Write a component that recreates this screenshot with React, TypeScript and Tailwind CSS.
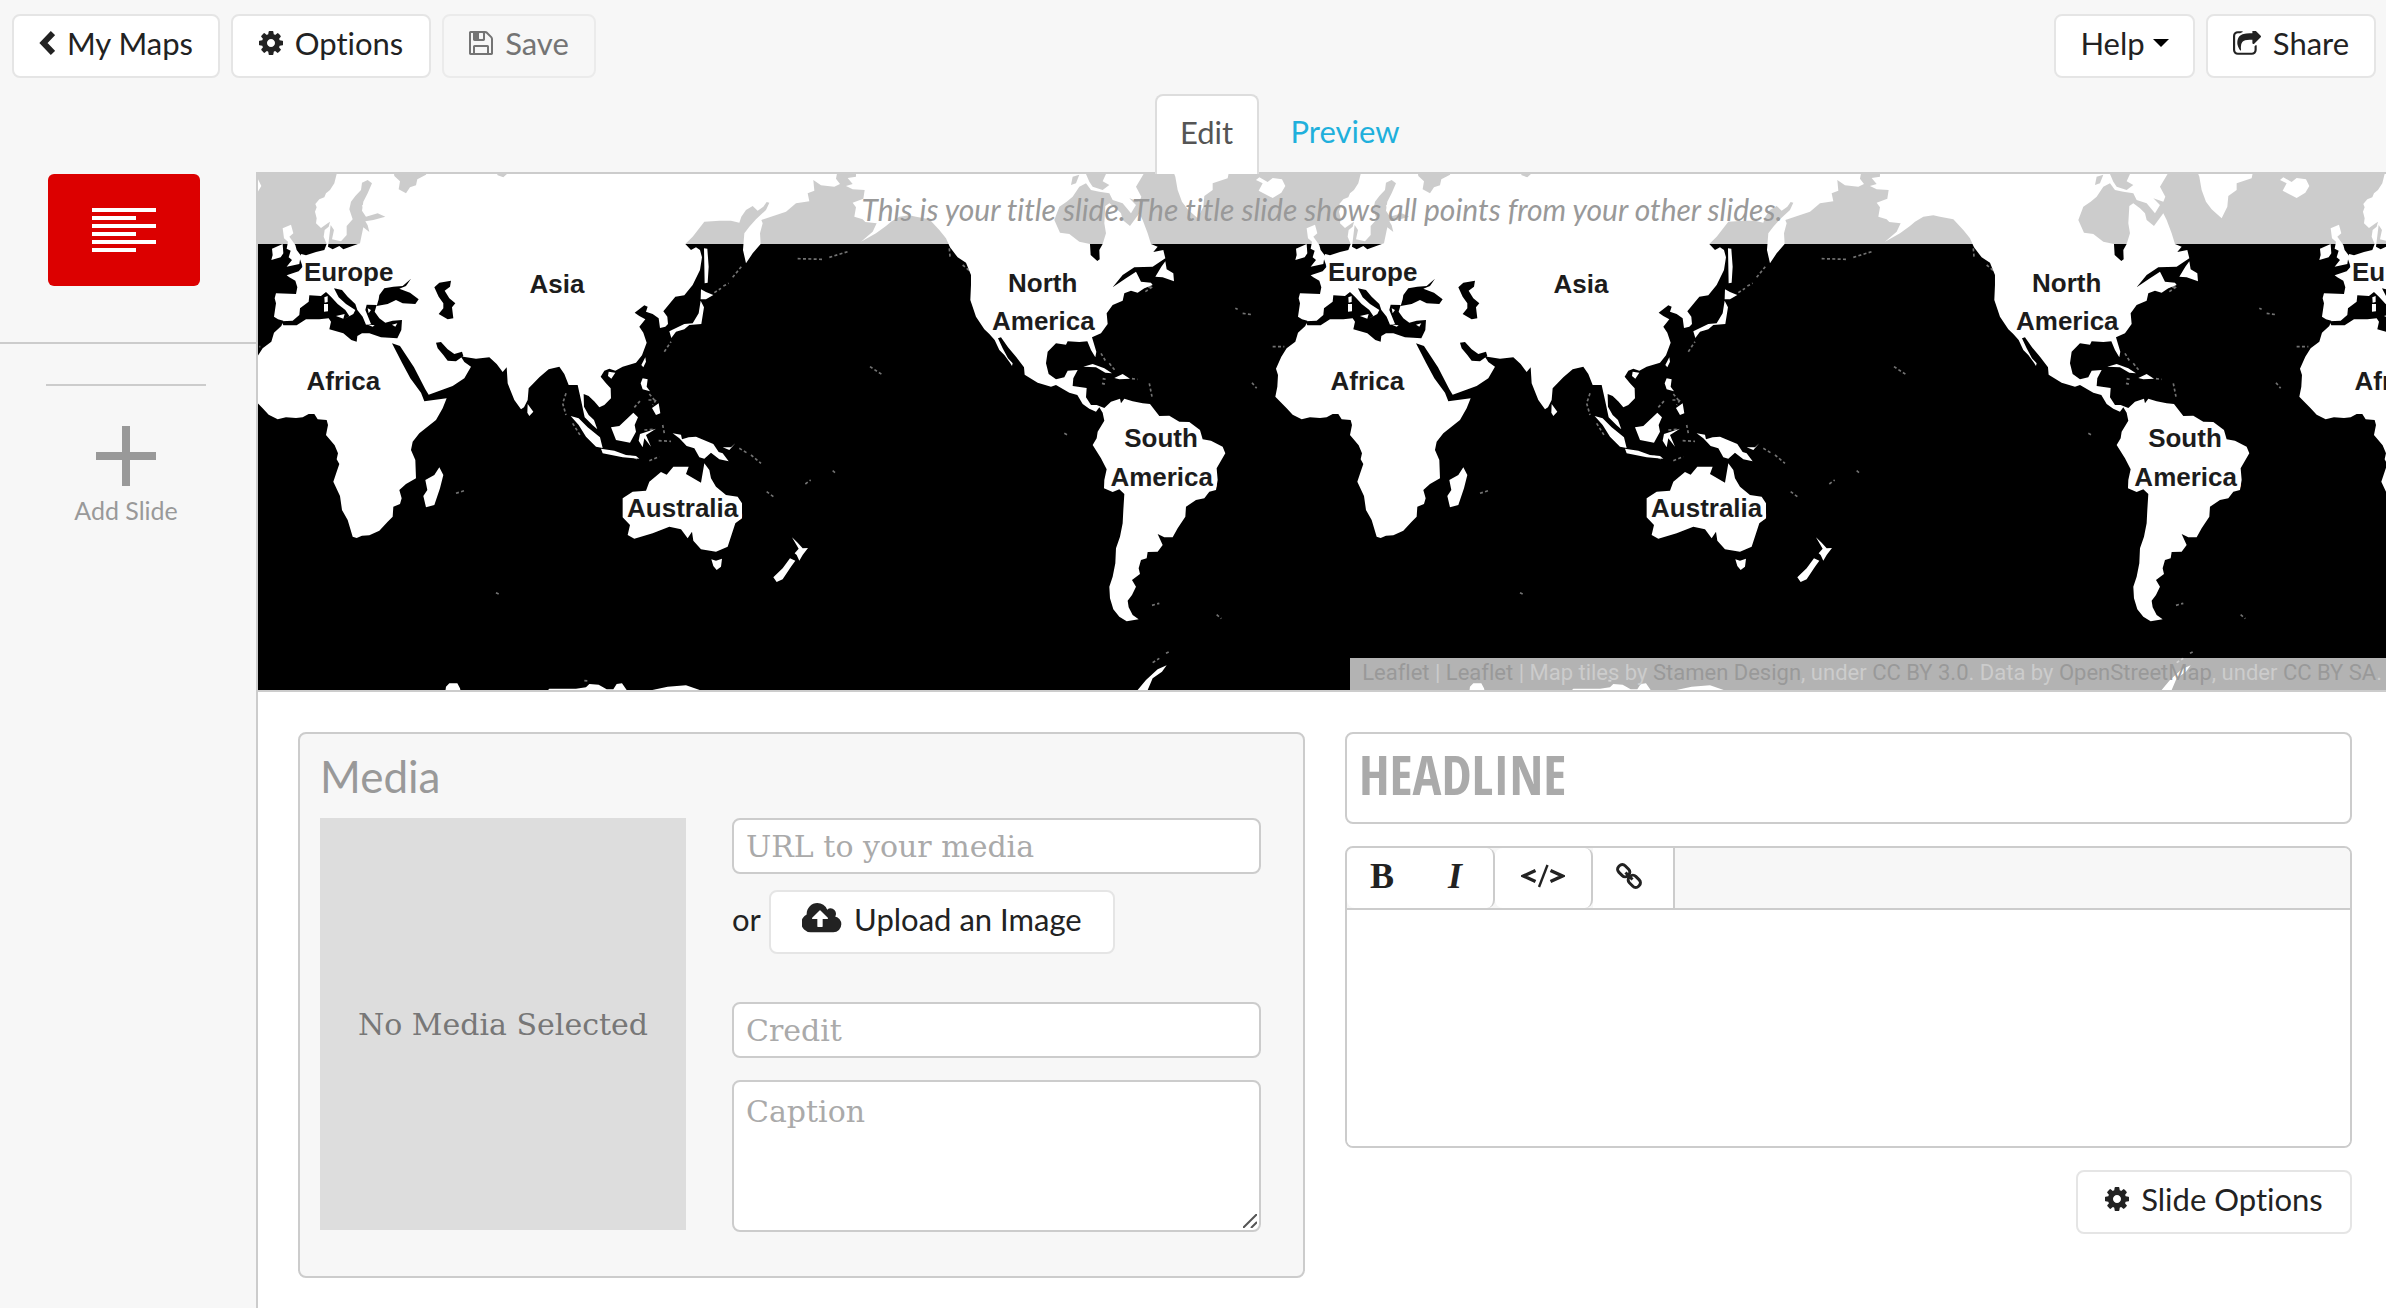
import React, { useId } from 'react';

const COG =
  'M1152 896q0-106-75-181t-181-75-181 75-75 181 75 181 181 75 181-75 75-181zm512-109v222q0 12-8 23t-20 13l-185 28q-19 54-39 91 35 50 107 138 10 12 10 25t-9 23q-27 37-99 108t-94 71q-12 0-26-9l-138-108q-44 23-91 38-16 136-29 186-7 28-36 28h-222q-14 0-24.5-8.5t-11.5-21.5l-28-184q-49-16-90-37l-141 107q-10 9-25 9-14 0-25-11-126-114-165-168-7-10-7-23 0-12 8-23 15-21 51-66.5t54-70.5q-27-50-41-99l-183-27q-13-2-21-12.5t-8-23.5v-222q0-12 8-23t19-13l186-28q14-46 39-92-40-57-107-138-10-12-10-24 0-10 9-23 26-36 98.5-107.5t94.5-71.5q13 0 26 10l138 107q44-23 91-38 16-136 29-186 7-28 36-28h222q14 0 24.5 8.5t11.5 21.5l28 184q49 16 90 37l142-107q9-9 24-9 13 0 25 10 129 119 165 170 7 8 7 22 0 12-8 23-15 21-51 66.5t-54 70.5q26 50 41 98l183 28q13 2 21 12.5t8 23.5z';
const FLOPPY =
  'M512 1536h768v-384h-768v384zm896 0h128v-896q0-14-10-38.5t-20-34.5l-281-281q-10-10-34-20t-39-10v416q0 40-28 68t-68 28h-576q-40 0-68-28t-28-68v-416h-128v1280h128v-416q0-40 28-68t68-28h832q40 0 68 28t28 68v416zm-384-928v-320q0-13-9.5-22.5t-22.5-9.5h-192q-13 0-22.5 9.5t-9.5 22.5v320q0 13 9.5 22.5t22.5 9.5h192q13 0 22.5-9.5t9.5-22.5zm640 32v928q0 40-28 68t-68 28h-1344q-40 0-68-28t-28-68v-1344q0-40 28-68t68-28h928q40 0 88 20t76 48l280 280q28 28 48 76t20 88z';
const SHARE =
  'M1408 989v259q0 119-84.5 203.5t-203.5 84.5h-832q-119 0-203.5-84.5t-84.5-203.5v-832q0-119 84.5-203.5t203.5-84.5h255q13 0 22.5 9.5t9.5 22.5q0 27-26 32-77 26-133 60-10 4-16 4h-112q-66 0-113 47t-47 113v832q0 66 47 113t113 47h832q66 0 113-47t47-113v-214q0-19 18-29 28-13 54-37 16-16 35-8 21 9 21 29zm237-496l-384 384q-18 19-45 19-12 0-25-5-39-17-39-59v-192h-160q-323 0-438 131-119 137-74 473 3 23-20 34-8 2-12 2-16 0-26-13-10-14-21-31t-39.5-68.5-49.5-99.5-38.5-114-17.5-122q0-49 3.5-91t14-90 28-88 47-81.5 68.5-74 94.5-61.5 124.5-48.5 159.5-30.5 196.5-11h160v-192q0-42 39-59 13-5 25-5 26 0 45 19l384 384q19 19 19 45t-19 45z';
const CLOUD =
  'M1216 864q0-14-9-23l-352-352q-9-9-23-9t-23 9l-351 351q-10 12-10 24 0 14 9 23t23 9h224v352q0 13 9.5 22.5t22.5 9.5h192q13 0 22.5-9.5t9.5-22.5v-352h224q13 0 22.5-9.5t9.5-22.5zm640 288q0 159-112.5 271.5t-271.5 112.5h-1088q-185 0-316.5-131.5t-131.5-316.5q0-130 70-240t188-165q-2-30-2-43 0-212 150-362t362-150q156 0 285.5 87t188.5 231q71-62 166-62 106 0 181 75t75 181q0 76-41 138 130 31 213.5 135.5t83.5 238.5z';

function Glyph({ d, box, className }: { d: string; box: string; className: string }) {
  return (
    <svg viewBox={box} className={className} fill="currentColor" aria-hidden="true">
      <path d={d} />
    </svg>
  );
}

function Button({ className = '', disabled = false, children }: { className?: string; disabled?: boolean; children: React.ReactNode }) {
  return (
    <button
      type="button"
      disabled={disabled}
      className={`flex h-16 items-center justify-center rounded-lg border-2 border-[#e5e5e5] bg-white pb-1.5 text-[31px] whitespace-nowrap text-[#222] disabled:border-[#ebebeb] disabled:bg-transparent disabled:text-[#747474] ${className}`}
    >
      {children}
    </button>
  );
}

/* Coastlines of one 1024px-wide world tile, in thirds of a pixel. */
const EURASIA_AFRICA =
  'M245 0L235 40 222 60 210 70 205 82 190 88 178 102 182 112 177 125 182 145 180 160 195 174 215 160 222 155 218 170 206 180 203 200 212 222 205 240 180 246 150 256 136 252 130 262 140 290 128 304 92 316 100 322 118 332 124 352 120 372 60 370 56 385 60 400 54 440 66 448 82 452 76 468 54 488 46 515 20 535 4 560 -12 596 -6 615 -8 650 -14 680 20 715 38 734 65 748 90 742 120 744 140 742 158 732 175 732 185 748 212 750 216 765 210 795 236 826 246 850 242 868 250 882 242 905 232 935 252 978 258 1020 275 1050 290 1100 302 1104 318 1097 340 1096 370 1082 395 1055 410 1040 412 1010 432 1002 437 985 430 960 450 942 480 925 478 870 465 840 470 815 490 790 540 750 560 715 572 685 505 694 495 668 463 625 438 578 408 520 432 528 474 592 508 658 518 674 590 648 625 625 645 590 625 576 612 556 622 560 660 566 700 562 722 582 740 606 752 592 755 640 775 690 795 718 804 712 815 690 818 655 850 622 878 598 910 590 925 612 938 645 965 645 975 690 986 742 1010 766 1024 778 1014 750 998 735 984 710 983 672 998 678 1016 695 1030 712 1045 705 1065 685 1064 655 1050 640 1034 620 1045 602 1060 596 1078 602 1100 590 1140 578 1158 556 1172 518 1162 488 1150 470 1168 448 1150 438 1136 428 1165 406 1175 410 1170 425 1190 432 1208 445 1212 474 1228 470 1236 462 1234 440 1222 424 1240 402 1258 380 1285 376 1310 345 1332 300 1338 262 1332 240 1320 232 1305 240 1288 222 1310 200 1345 155 1390 152 1425 152 1450 158 1456 140 1470 120 1490 108 1505 122 1522 110 1532 96 1540 98 1530 120 1500 148 1480 170 1465 190 1461 240 1470 280 1490 250 1514 222 1512 190 1520 160 1516 150 1545 140 1590 125 1620 100 1660 94 1655 70 1675 62 1672 30 1695 46 1735 50 1752 42 1740 26 1745 0Z';
const AMERICAS =
  'M1800 0L1800 20 1775 24 1790 42 1770 48 1790 58 1826 60 1822 86 1790 98 1800 112 1795 140 1820 148 1828 156 1862 160 1850 185 1815 215 1860 190 1890 168 1905 155 1930 140 1960 136 1980 140 2020 148 2050 180 2070 205 2082 232 2105 262 2130 278 2145 315 2145 345 2143 390 2160 440 2185 478 2200 492 2216 510 2230 540 2245 555 2262 578 2268 588 2270 580 2256 565 2240 535 2226 505 2235 502 2256 532 2280 560 2304 592 2306 614 2345 638 2385 650 2400 645 2440 668 2464 675 2480 702 2500 716 2520 725 2530 712 2540 728 2545 752 2525 785 2522 805 2510 825 2535 865 2552 898 2545 930 2544 955 2570 966 2590 958 2605 972 2602 1020 2600 1060 2592 1100 2580 1135 2578 1180 2570 1220 2560 1250 2562 1285 2572 1318 2590 1340 2612 1354 2648 1348 2630 1335 2618 1312 2615 1292 2628 1275 2640 1250 2628 1230 2652 1212 2648 1195 2655 1170 2672 1165 2675 1146 2705 1145 2720 1125 2705 1092 2725 1102 2750 1102 2765 1075 2788 1040 2790 1010 2820 990 2845 985 2860 965 2880 960 2885 930 2882 895 2908 850 2900 830 2865 812 2840 808 2832 780 2800 756 2770 755 2740 737 2710 738 2682 702 2660 700 2630 694 2605 686 2595 700 2592 686 2565 695 2545 714 2522 705 2505 705 2490 682 2492 654 2450 648 2452 625 2465 600 2435 602 2425 622 2400 628 2378 612 2370 580 2375 545 2400 520 2430 524 2435 514 2470 516 2494 514 2505 540 2518 562 2521 545 2508 502 2535 490 2555 462 2552 430 2570 405 2600 392 2605 370 2625 362 2645 368 2665 355 2690 345 2685 338 2655 335 2645 315 2640 305 2610 325 2570 352 2600 315 2635 292 2690 290 2728 265 2722 240 2692 246 2705 230 2685 222 2675 190 2660 150 2650 130 2622 168 2600 150 2595 130 2580 115 2560 100 2548 108 2545 160 2550 190 2540 222 2530 240 2531 268 2524 273 2504 255 2502 222 2470 215 2440 192 2412 188 2395 150 2410 110 2432 95 2450 80 2470 50 2490 40 2505 60 2530 65 2560 70 2570 90 2600 100 2625 130 2640 105 2620 85 2650 95 2656 80 2640 50 2670 0Z';
const ISLANDS =
  'M80 175L105 164 112 190 100 200 118 225 122 240 134 256 130 282 92 290 108 270 98 262 104 242 92 236 96 215 84 205ZM48 236L80 222 82 250 74 262 46 270 50 255ZM550 892L562 915 552 955 535 1005 510 1012 502 978 514 960 508 930 535 915ZM815 702L832 725 820 738 814 728ZM944 738L968 745 995 772 1032 802 1040 834 1020 830 990 800 968 765ZM1035 836L1075 842 1110 855 1140 858 1150 866 1100 862 1040 850ZM1065 772L1090 768 1132 728 1146 742 1136 765 1140 785 1122 818 1080 810ZM1152 792L1200 776 1170 795 1185 830 1165 805 1160 832 1148 812ZM1250 790L1275 794 1278 808 1298 802 1320 800 1372 822 1388 846 1400 850 1418 874 1390 868 1365 848 1345 866 1330 862 1315 835 1292 828 1270 805ZM1400 832L1425 832 1438 820 1420 840ZM1345 880L1360 900 1365 925 1380 950 1410 975 1445 980 1458 1000 1458 1045 1438 1060 1415 1130 1380 1145 1335 1138 1312 1112 1308 1085 1295 1105 1275 1078 1240 1070 1190 1090 1135 1106 1115 1095 1122 1065 1100 1042 1100 985 1130 965 1170 962 1180 935 1215 906 1232 914 1252 890 1298 890 1290 912 1335 938ZM1366 1168L1380 1172 1398 1166 1395 1190 1382 1200 1372 1188ZM1608 1102L1625 1118 1640 1135 1656 1134 1640 1155 1630 1172 1622 1155 1616 1150 1628 1136ZM1602 1165L1618 1172 1605 1190 1580 1228 1562 1236 1552 1222 1580 1195ZM1335 358L1350 366 1372 375 1350 388 1334 388ZM1334 392L1344 412 1336 462 1300 465 1285 478 1260 485 1246 504 1240 484 1285 462 1310 460 1328 430ZM1344 235L1354 236 1358 290 1355 338 1346 340ZM1168 562L1170 575 1162 592 1156 585ZM1058 605L1078 608 1066 626 1056 618ZM1160 625L1175 628 1172 650 1182 664 1160 658 1154 640ZM1188 714L1208 700 1213 730 1200 735ZM2482 590L2510 582 2545 595 2568 610 2548 608 2520 592ZM2575 624L2600 612 2622 626 2590 628ZM2716 290L2728 274 2732 298 2752 310 2754 334 2720 322 2698 320ZM2750 0L2758 20 2765 60 2778 95 2795 118 2825 145 2842 110 2845 78 2870 60 2870 40 2915 25 2920 0ZM3000 30L3020 40 3008 62 3050 84 3076 68 3088 48 3078 28 3050 24 3035 36 3010 22ZM567 1572L570 1550 580 1540 604 1540 612 1555 616 1572ZM865 1572L880 1556 960 1556 990 1552 1000 1542 1028 1544 1052 1558 1072 1558 1082 1542 1098 1540 1112 1560 1180 1562 1235 1550 1290 1546 1337 1562 1340 1572ZM2732 1486L2705 1498 2670 1530 2635 1572 2670 1572 2690 1525 2718 1505Z';
const INLAND_SEAS =
  'M348 40L335 30 318 38 315 60 298 78 285 95 280 118 290 148 272 168 272 195 255 214 228 208 234 180 224 165 216 230 230 238 250 228 262 238 295 226 312 220 316 200 322 172 340 186 335 166 328 154 352 150 388 140 365 130 330 140 318 122 322 95 335 70ZM412 0L415 18 432 34 428 58 450 70 462 52 480 46 484 28 510 14 515 0ZM718 0L725 16 742 22 755 10 752 0ZM76 454L110 452 130 435 132 415 158 395 160 376 195 378 210 366 225 380 245 402 268 420 280 438 266 446 292 432 298 420 270 402 248 382 234 355 258 360 275 380 298 402 304 420 320 440 330 464 345 462 328 420 332 404 362 405 356 425 370 445 388 458 410 452 438 450 436 480 424 505 375 502 340 490 318 490 304 498 302 515 286 510 262 490 220 478 225 455 218 445 190 448 150 448 122 466 82 466ZM370 375L385 355 412 350 440 348 465 326 450 348 430 356 462 368 488 388 478 402 440 400 420 390 395 402 362 408 368 388ZM535 352L550 338 585 332 582 350 566 362 580 385 598 400 588 412 592 445 575 448 548 432 562 415 562 400 548 380ZM540 518L555 516 575 538 595 552 618 545 622 558 600 574 575 572 562 555 545 535ZM2450 20L2470 14 2460 40 2445 45ZM2490 12L2550 12 2540 34 2560 45 2540 60 2510 50 2500 35Z';
const SEA_ISLES =
  'M205 382L215 378 215 396 206 398ZM204 402L216 402 216 424 204 425ZM240 438L266 432 262 446ZM408 464L424 460 418 470ZM332 463L356 466 350 470ZM335 415L345 420 338 430ZM318 105L328 108 322 116Z';
/* Archipelagos and reefs too small to outline. */
const SPECKS =
  'M1375 368L1395 355M1402 348L1418 340M1430 322L1460 285M1180 672L1195 690L1175 690M1200 690L1190 705M1135 712L1155 690M1165 780L1195 778M1208 812L1245 814M1220 765L1225 790M1180 872L1210 860M1120 858L1150 868M930 670L920 700L930 735M950 760L975 800M1450 835L1475 850M1485 855L1515 880M1532 965L1555 982M720 1268L732 1274M600 970L625 962M1625 266L1700 268M1720 262L1775 245M2538 640L2552 644M2540 626L2550 628M2628 626L2645 628M2535 550L2550 575M2560 580L2580 605M2680 640L2688 680M1842 590L1880 615M1648 942L1664 930M1730 902L1740 910M2425 790L2435 795M2688 1306L2710 1300M2882 1334L2896 1346M2938 415L2945 418M2960 430L2988 434M3050 530L3085 530M2988 638L3002 655M2690 1478L2710 1465M2730 1450L2740 1445M985 1532L1000 1533M2080 235L2082 260M2120 285L2155 315M2668 365L2690 350L2660 352M1225 545L1245 515';

const LABELS: [string, number, number][] = [
  ['Europe', 278, 333],
  ['Asia', 903, 368],
  ['Africa', 262, 660],
  ['Australia', 1280, 1040],
  ['North', 2360, 366],
  ['America', 2362, 480],
  ['South', 2715, 832],
  ['America', 2717, 947],
];

function WorldMap() {
  return (
    <svg className="block h-full w-full bg-black" role="img" aria-label="World map">
      <defs>
        <g id="world">
          <g fill="#fff">
            <path d={EURASIA_AFRICA} />
            <path d={AMERICAS} />
            <path d={ISLANDS} />
          </g>
          <path d={INLAND_SEAS} fill="#000" />
          <path d={SEA_ISLES} fill="#fff" />
          <path d={SPECKS} fill="none" stroke="#fff" strokeOpacity="0.45" strokeWidth="5" strokeDasharray="9 7" />
          <g
            className="font-bold"
            fontFamily="'Liberation Sans', Arial, sans-serif"
            fontSize="78"
            textAnchor="middle"
            fill="#1c1c1c"
            stroke="#fff"
            strokeWidth="20"
            strokeLinejoin="round"
            paintOrder="stroke"
          >
            {LABELS.map(([name, x, y]) => (
              <text key={`${name}${x}`} x={x} y={y}>
                {name}
              </text>
            ))}
          </g>
        </g>
      </defs>
      <g transform="scale(0.33333) translate(-6 -12)">
        {[-1, 0, 1, 2].map((n) => (
          <use key={n} href="#world" x={n * 3072} />
        ))}
      </g>
    </svg>
  );
}

function Attribution() {
  const link = 'text-[#999]';
  return (
    <p className="absolute right-0 bottom-0 h-8 bg-white/70 pr-1 pl-3 font-[Roboto,sans-serif] text-[22px] leading-[30px] whitespace-nowrap text-[#ccc]">
      <a href="#leaflet" className={link}>Leaflet</a> | <a href="#leaflet" className={link}>Leaflet</a> | Map tiles by{' '}
      <a href="#stamen" className={link}>Stamen Design</a>, under <a href="#cc-by" className={link}>CC BY 3.0</a>. Data by{' '}
      <a href="#osm" className={link}>OpenStreetMap</a>, under <a href="#cc-by-sa" className={link}>CC BY SA</a>.
    </p>
  );
}

function Sidebar() {
  return (
    <aside className="w-64 shrink-0 pt-20">
      <div className="border-b-2 border-[#ccc] pb-14">
        <button type="button" aria-label="Title slide" className="ml-12 flex h-28 w-38 items-center justify-center rounded-md bg-[#dc0000]">
          <svg width="64" height="44" viewBox="0 0 64 44" fill="#fff" aria-hidden="true">
            {[64, 44, 64, 44, 64, 44].map((w, i) => (
              <rect key={i} y={i * 8} width={w} height="4" />
            ))}
          </svg>
        </button>
      </div>
      <div className="mt-10 mr-[50px] ml-[46px] border-t-2 border-[#ccc] pt-10">
        <button type="button" className="flex w-full flex-col items-center gap-2 text-[25px] leading-8 text-[#999]">
          <svg width="60" height="60" viewBox="0 0 60 60" fill="currentColor" aria-hidden="true">
            <rect x="26" width="8" height="60" />
            <rect y="26" width="60" height="8" />
          </svg>
          Add Slide
        </button>
      </div>
    </aside>
  );
}

const field =
  'block w-full rounded-lg border-2 border-[#ccc] bg-white px-3 font-[DejaVu_Serif,serif] text-[30px] text-[#222] outline-none placeholder:text-[#aaa]';

function MediaPanel() {
  const id = useId();
  return (
    <section className="min-w-0 rounded-lg border-2 border-[#ccc] bg-[#f7f7f7] pt-5 pr-[42px] pb-11 pl-5">
      <h2 className="text-[44px] leading-[44px] text-[#999]">Media</h2>
      <div className="mt-5 flex gap-[46px]">
        <div className="flex h-[412px] w-[366px] shrink-0 items-center justify-center bg-[#ddd] font-[DejaVu_Serif,serif] text-[30px] whitespace-nowrap text-[#777]">
          No Media Selected
        </div>
        <div className="min-w-0 flex-1">
          <input id={`${id}-url`} type="text" aria-label="URL to your media" placeholder="URL to your media" className={`h-14 ${field}`} />
          <div className="mt-4 flex items-center gap-2 text-[31px] text-[#222]">
            <span className="pb-1.5">or</span>
            <Button className="w-[346px] gap-3">
              <Glyph d={CLOUD} box="0 128 1856 1536" className="h-8 w-10" />
              Upload an Image
            </Button>
          </div>
          <input id={`${id}-credit`} type="text" aria-label="Credit" placeholder="Credit" className={`mt-12 h-14 ${field}`} />
          <div className="relative mt-[22px]">
            <textarea
              id={`${id}-caption`}
              aria-label="Caption"
              placeholder="Caption"
              className={`h-[152px] pt-2 leading-11 [&::-webkit-resizer]:hidden ${field}`}
            />
            <svg className="pointer-events-none absolute right-1 bottom-1 text-[#555]" width="14" height="14" viewBox="0 0 14 14" stroke="currentColor" strokeWidth="2" aria-hidden="true">
              <path d="M0 14L14 0M8 14L14 8" />
            </svg>
          </div>
        </div>
      </div>
    </section>
  );
}

function TextPanel() {
  return (
    <section className="flex min-w-0 flex-col gap-[22px]">
      <input
        type="text"
        aria-label="Headline"
        placeholder="HEADLINE"
        className="block h-[92px] w-full rounded-lg border-2 border-[#ccc] bg-white px-3 pb-2 font-['Open_Sans_Condensed','Roboto_Condensed',sans-serif] text-[54px] font-bold text-[#222] outline-none placeholder:text-[#aaa]"
      />
      <div className="overflow-hidden rounded-lg border-2 border-[#ccc] bg-white">
        <div role="toolbar" aria-label="Formatting" className="flex h-[62px] border-b-2 border-[#ccc] bg-[#f7f7f7] text-[#222]">
          <div className="flex rounded-lg border-r-2 border-[#ccc] bg-white pb-1 font-['Liberation_Serif',serif] text-[36px] font-bold">
            <button type="button" className="w-[70px]">B</button>
            <button type="button" className="w-19 italic">I</button>
          </div>
          <div className="flex rounded-lg border-r-2 border-[#ccc] bg-white">
            <button type="button" aria-label="Edit HTML" className="flex w-24 items-center justify-center pb-1">
              <svg width="44" height="24" viewBox="0 0 44 24" fill="none" stroke="currentColor" aria-hidden="true">
                <path d="M14.500 6.500L2.500 12L14.500 17.500M29.500 6.500L41.500 12L29.500 17.500" strokeWidth="3.400" />
                <path d="M26.500 1L18 23" strokeWidth="2.400" />
              </svg>
            </button>
          </div>
          <div className="flex border-r-2 border-[#ccc] bg-white">
            <button type="button" aria-label="Insert link" className="flex w-20 items-center justify-center pr-2 pb-1">
              <svg width="26" height="26" viewBox="0 0 26 26" fill="none" stroke="currentColor" strokeWidth="3" aria-hidden="true">
                <g transform="rotate(45 13 13)">
                  <rect x="-1" y="8.500" width="13" height="9" rx="4" />
                  <rect x="14" y="8.500" width="13" height="9" rx="4" />
                  <path d="M8 13H18" />
                </g>
              </svg>
            </button>
          </div>
        </div>
        <textarea aria-label="Slide text" className="block h-[236px] w-full resize-none bg-white p-3 font-[DejaVu_Serif,serif] text-[30px] outline-none" />
      </div>
      <Button className="w-[276px] gap-3 self-end">
        <Glyph d={COG} box="128 128 1536 1536" className="size-6" />
        Slide Options
      </Button>
    </section>
  );
}

export default function App() {
  return (
    <div className="flex min-h-screen flex-col bg-[#f7f7f7] font-[Lato,sans-serif] [font-variant-ligatures:none]">
      <header className="flex h-[94px] items-start gap-[11px] pt-3.5 pr-2.5 pl-3">
        <Button className="w-[208px] gap-3">
          <svg width="16" height="26" viewBox="0 0 16 26" fill="none" stroke="currentColor" strokeWidth="6" aria-hidden="true">
            <path d="M14 3L4.500 13L14 23" />
          </svg>
          My Maps
        </Button>
        <Button className="w-[200px] gap-3">
          <Glyph d={COG} box="128 128 1536 1536" className="size-6" />
          Options
        </Button>
        <Button disabled className="w-[154px] gap-3">
          <Glyph d={FLOPPY} box="128 128 1536 1536" className="size-6" />
          Save
        </Button>
        <div className="ml-auto flex gap-[11px]">
          <Button className="w-[141px] gap-2">
            Help
            <svg width="16" height="8" viewBox="0 0 16 8" fill="#000" aria-hidden="true">
              <path d="M0 0H16L8 8Z" />
            </svg>
          </Button>
          <Button className="w-[170px] gap-3">
            <Glyph d={SHARE} box="0 128 1664 1408" className="h-6 w-7" />
            Share
          </Button>
        </div>
      </header>
      <div className="flex flex-1">
        <Sidebar />
        <main className="flex min-w-0 flex-1 flex-col">
          <nav className="flex h-20 justify-center border-b-2 border-[#ccc] pr-16 text-[31px]">
            <a href="#edit" aria-current="page" className="relative -mb-0.5 flex w-26 items-center justify-center rounded-t-lg border-2 border-b-0 border-[#ddd] bg-white pb-1.5 text-[#555]">
              Edit
            </a>
            <a href="#preview" className="flex items-center pr-6 pb-1 pl-8 text-[#1fb0dc]">
              Preview
            </a>
          </nav>
          <div className="flex flex-1 flex-col border-l-2 border-[#ccc] bg-white">
            <div className="relative h-[518px] overflow-hidden border-b-2 border-[#ccc]">
              <WorldMap />
              <p className="absolute inset-x-0 top-0 flex h-[70px] items-center justify-center bg-white/80 text-[30px] text-[#999] italic">
                This is your title slide. The title slide shows all points from your other slides.
              </p>
              <Attribution />
            </div>
            <div className="grid grid-cols-2 items-start gap-10 pt-10 pr-[34px] pb-8 pl-10">
              <MediaPanel />
              <TextPanel />
            </div>
          </div>
        </main>
      </div>
    </div>
  );
}
